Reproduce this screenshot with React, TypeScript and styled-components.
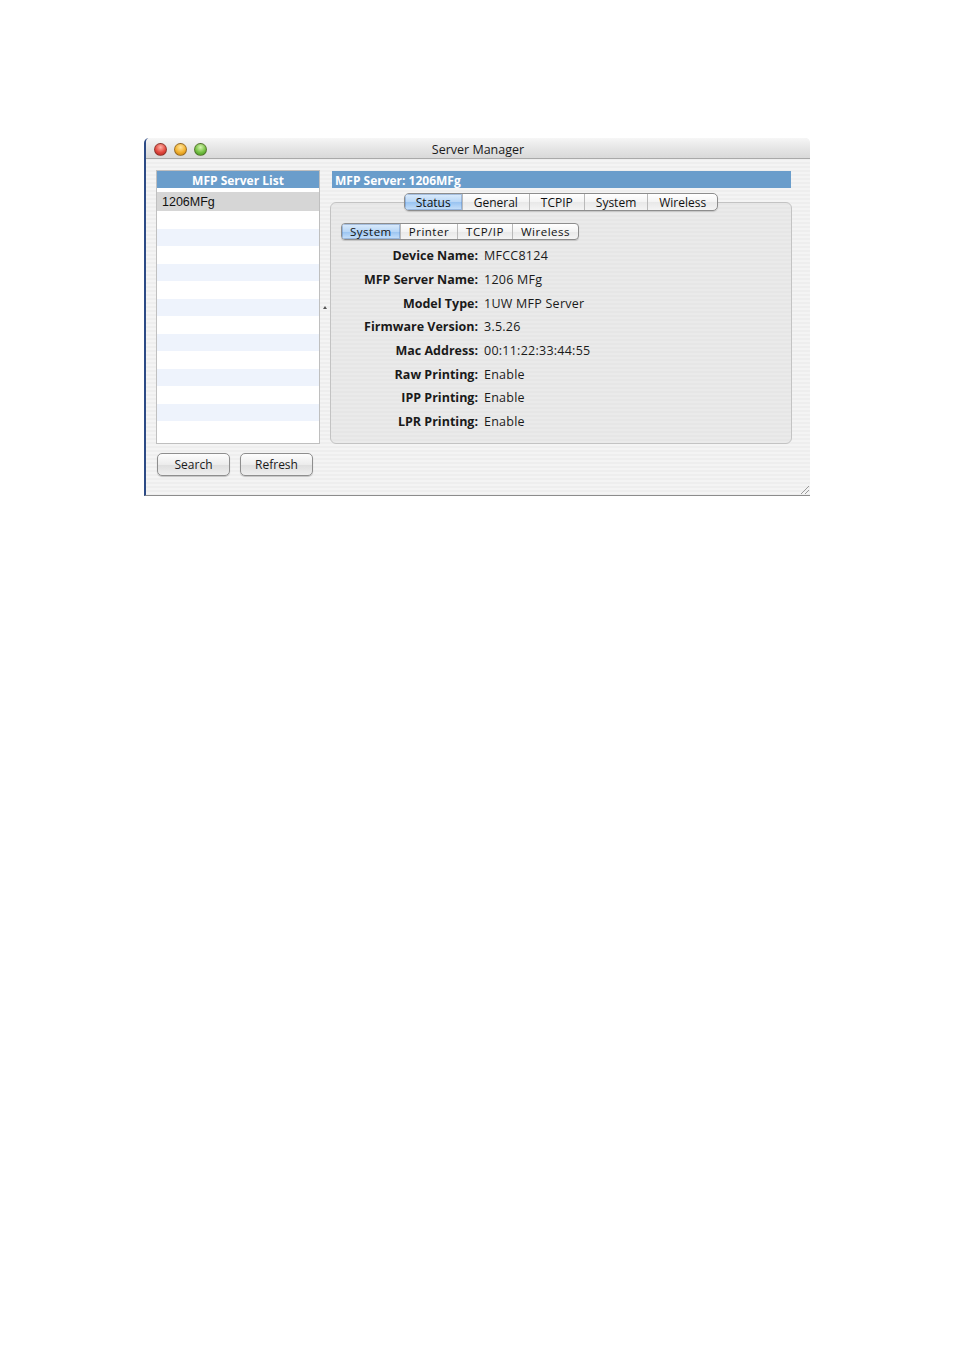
import React from "react";
import styled, { createGlobalStyle } from "styled-components";

const GlobalStyle = createGlobalStyle`
  html, body {
    margin: 0;
    padding: 0;
    background: #ffffff;
  }
  body {
    font-family: "Open Sans", "DejaVu Sans", sans-serif;
    color: #111;
  }
`;

const Page = styled.div`
  box-sizing: border-box;
  height: 1350px;
  padding: 138px 0 0 144px;
`;

const Window = styled.div`
  position: relative;
  box-sizing: border-box;
  width: 666px;
  height: 358px;
  display: flex;
  flex-direction: column;
  border-left: 2px solid #2d4b86;
  border-bottom: 1px solid #8c8c8c;
  border-top-left-radius: 5px;
  border-top-right-radius: 5px;
  overflow: hidden;
  background: repeating-linear-gradient(180deg, #eeeeee 0 2px, #f4f4f4 2px 4px);
`;

const TitleBar = styled.div`
  height: 21px;
  box-sizing: border-box;
  display: grid;
  grid-template-columns: 1fr auto 1fr;
  align-items: center;
  border-bottom: 1px solid #a9a9a9;
  background: linear-gradient(180deg, #f6f6f6 0%, #e6e6e6 50%, #d9d9d9 100%);
`;

const Lights = styled.div`
  display: flex;
  gap: 7px;
  padding-left: 8px;
`;

const Light = styled.span<{ $c1: string; $c2: string; $c3: string }>`
  width: 13px;
  height: 13px;
  box-sizing: border-box;
  border-radius: 50%;
  border: 1px solid rgba(60, 40, 30, 0.45);
  background: radial-gradient(circle at 50% 30%, ${(p) => p.$c1} 0%, ${(p) => p.$c2} 55%, ${(p) => p.$c3} 100%);
`;

const Title = styled.div`
  font-size: 12.5px;
  color: #1a1a1a;
  line-height: 20px;
  padding-top: 2px;
`;

const Body = styled.div`
  flex: 1;
  display: grid;
  grid-template-columns: 164px 10px 462px;
  grid-template-rows: 274px auto;
  row-gap: 9px;
  padding: 11px 18px 0 10px;
`;

const ListBox = styled.div`
  box-sizing: border-box;
  display: flex;
  flex-direction: column;
  border: 1px solid #bfbfbf;
  background: #ffffff;
  overflow: hidden;
`;

const BlueHeader = styled.div<{ $align?: string }>`
  height: 17px;
  line-height: 19px;
  background: #6a9dcb;
  color: #ffffff;
  font-size: 12px;
  font-weight: 700;
  text-align: ${(p) => p.$align || "center"};
  white-space: nowrap;
`;

const ListRows = styled.div`
  padding-top: 4px;
  display: flex;
  flex-direction: column;
`;

const ListRow = styled.div<{ $kind: "selected" | "white" | "blue" }>`
  height: ${(p) => (p.$kind === "selected" ? "19px" : "17.5px")};
  line-height: 20px;
  padding-left: 5px;
  font-family: "Liberation Sans", Arial, sans-serif;
  font-size: 12.5px;
  color: #111;
  background: ${(p) =>
    p.$kind === "selected" ? "#d6d6d6" : p.$kind === "blue" ? "#eef3fc" : "#ffffff"};
`;

const Splitter = styled.div`
  display: flex;
  align-items: center;
  justify-content: center;
`;

const Caret = styled.span`
  width: 0;
  height: 0;
  border-left: 2px solid transparent;
  border-right: 2px solid transparent;
  border-bottom: 3px solid #555;
`;

const RightCol = styled.div`
  display: flex;
  flex-direction: column;
`;

const RightHeader = styled(BlueHeader)`
  margin: 1px 1px 0 2px;
  padding-left: 3px;
`;

const TabRow = styled.div`
  position: relative;
  z-index: 1;
  display: flex;
  justify-content: center;
  margin-top: 5px;
  margin-bottom: -9px;
`;

const Segmented = styled.div<{ $h: number; $r: number }>`
  display: flex;
  box-sizing: border-box;
  height: ${(p) => p.$h}px;
  border: 1px solid #8d8d8d;
  border-radius: ${(p) => p.$r}px;
  overflow: hidden;
  background: linear-gradient(180deg, #ffffff 0%, #f3f3f3 50%, #e8e8e8 51%, #f4f4f4 100%);
  box-shadow: 0 1px 1px rgba(0, 0, 0, 0.15);
`;

const Segment = styled.div<{ $active?: boolean; $size: number; $pad: number; $ls?: number }>`
  display: flex;
  align-items: center;
  padding: 0 ${(p) => p.$pad}px;
  font-size: ${(p) => p.$size}px;
  letter-spacing: ${(p) => p.$ls || 0}px;
  color: #111;
  white-space: nowrap;
  & + & {
    border-left: 1px solid #b9b9b9;
  }
  ${(p) =>
    p.$active &&
    `
    background: linear-gradient(180deg, #dcecfc 0%, #b8d6f6 50%, #98c3f1 51%, #c9e1fa 100%);
    box-shadow: inset 0 0 0 1px rgba(70, 110, 170, 0.35);
  `}
`;

const TabBox = styled.div`
  flex: 1;
  box-sizing: border-box;
  display: flex;
  flex-direction: column;
  padding-top: 20px;
  border: 1px solid #c3c3c3;
  border-radius: 6px;
  background: repeating-linear-gradient(180deg, #e6e6e6 0 2px, #eaeaea 2px 4px);
`;

const SubTabRow = styled.div`
  display: flex;
  padding-left: 10px;
`;

const Fields = styled.div`
  display: grid;
  grid-template-columns: 147px 1fr;
  grid-auto-rows: 23.7px;
  column-gap: 6px;
  align-items: center;
  margin-top: 4px;
`;

const Label = styled.div`
  text-align: right;
  font-size: 12.5px;
  font-weight: 700;
  color: #1a1a1a;
  white-space: nowrap;
`;

const Value = styled.div`
  font-size: 12.5px;
  letter-spacing: 0.25px;
  color: #1a1a1a;
  white-space: nowrap;
`;

const ButtonRow = styled.div`
  display: flex;
  gap: 10px;
  padding-left: 1px;
  grid-column: 1 / 3;
`;

const Button = styled.button`
  width: 73px;
  height: 23px;
  box-sizing: border-box;
  padding: 0;
  border: 1px solid #8e8e8e;
  border-radius: 5px;
  font-family: "Open Sans", "DejaVu Sans", sans-serif;
  font-size: 12px;
  color: #1a1a1a;
  background: linear-gradient(180deg, #fdfdfd 0%, #ececec 50%, #dedede 51%, #eeeeee 100%);
  box-shadow: 0 1px 1px rgba(0, 0, 0, 0.2);
`;

const Grip = styled.svg`
  position: absolute;
  right: 0;
  bottom: 0;
`;

const rows = [
  ["Device Name:", "MFCC8124"],
  ["MFP Server Name:", "1206 MFg"],
  ["Model Type:", "1UW MFP Server"],
  ["Firmware Version:", "3.5.26"],
  ["Mac Address:", "00:11:22:33:44:55"],
  ["Raw Printing:", "Enable"],
  ["IPP Printing:", "Enable"],
  ["LPR Printing:", "Enable"],
];

const tabs = ["Status", "General", "TCPIP", "System", "Wireless"];
const subTabs = ["System", "Printer", "TCP/IP", "Wireless"];

export default function App() {
  const emptyRows = Array.from({ length: 13 }, (_, i) => (i % 2 === 0 ? "white" : "blue")) as (
    | "white"
    | "blue"
  )[];

  return (
    <Page>
      <GlobalStyle />
      <Window>
        <TitleBar>
          <Lights>
            <Light $c1="#ffb3a8" $c2="#e2483f" $c3="#a8261f" />
            <Light $c1="#ffe6a0" $c2="#f2b12e" $c3="#b97a12" />
            <Light $c1="#d6f5b0" $c2="#74c043" $c3="#3f8a1e" />
          </Lights>
          <Title>Server Manager</Title>
          <div />
        </TitleBar>

        <Body>
          <ListBox>
            <BlueHeader>MFP Server List</BlueHeader>
            <ListRows>
              <ListRow $kind="selected">1206MFg</ListRow>
              {emptyRows.map((k, i) => (
                <ListRow key={i} $kind={k} />
              ))}
            </ListRows>
          </ListBox>

          <Splitter>
            <Caret />
          </Splitter>

          <RightCol>
            <RightHeader $align="left">MFP Server: 1206MFg</RightHeader>
            <TabRow>
              <Segmented $h={18} $r={5}>
                {tabs.map((t) => (
                  <Segment key={t} $active={t === "Status"} $size={12} $pad={11}>
                    {t}
                  </Segment>
                ))}
              </Segmented>
            </TabRow>
            <TabBox>
              <SubTabRow>
                <Segmented $h={17} $r={4}>
                  {subTabs.map((t) => (
                    <Segment key={t} $active={t === "System"} $size={11.5} $pad={8} $ls={0.5}>
                      {t}
                    </Segment>
                  ))}
                </Segmented>
              </SubTabRow>
              <Fields>
                {rows.map(([l, v]) => (
                  <React.Fragment key={l}>
                    <Label>{l}</Label>
                    <Value>{v}</Value>
                  </React.Fragment>
                ))}
              </Fields>
            </TabBox>
          </RightCol>

          <ButtonRow>
            <Button>Search</Button>
            <Button>Refresh</Button>
          </ButtonRow>
        </Body>

        <Grip width="11" height="11" viewBox="0 0 11 11">
          <line x1="10" y1="2" x2="2" y2="10" stroke="#9a9a9a" strokeWidth="1" />
          <line x1="10" y1="6" x2="6" y2="10" stroke="#9a9a9a" strokeWidth="1" />
        </Grip>
      </Window>
    </Page>
  );
}
